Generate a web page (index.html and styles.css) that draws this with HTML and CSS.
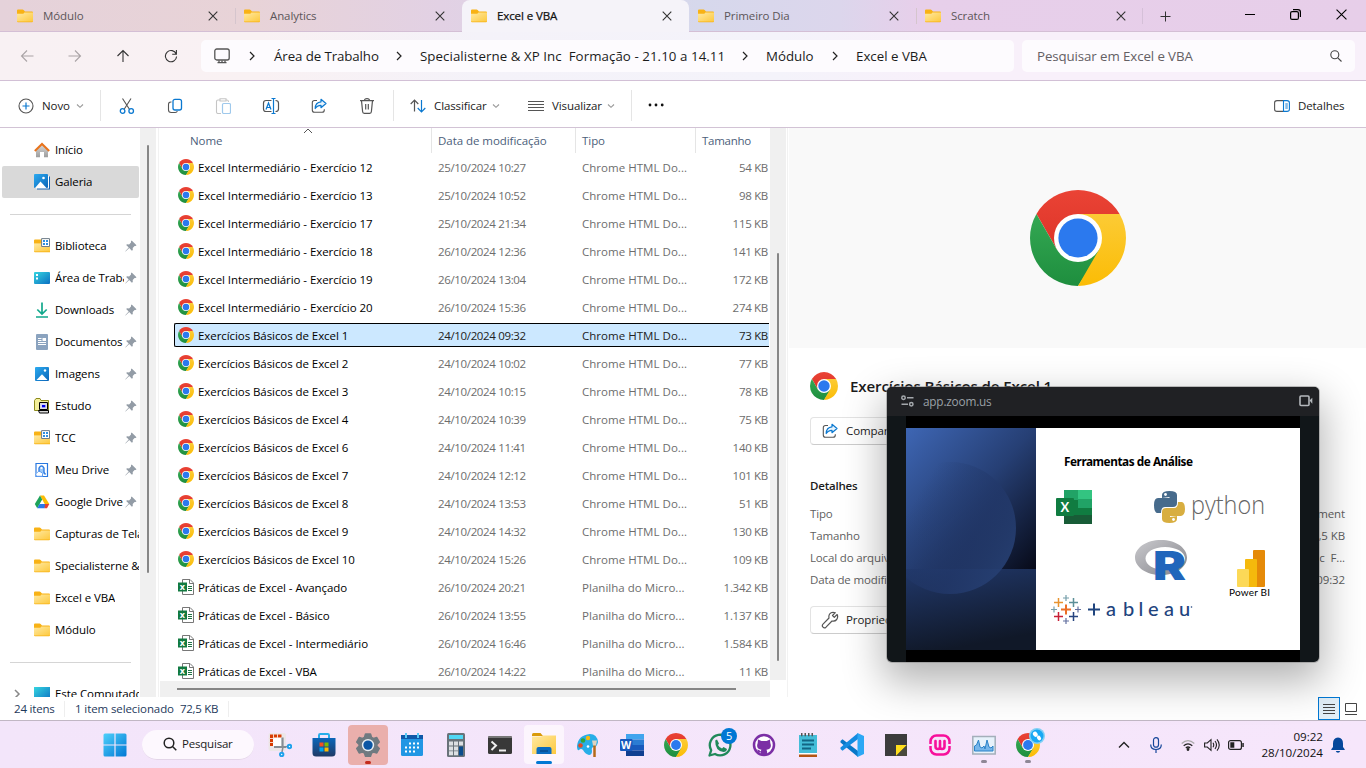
FILE: index.html
```html
<!DOCTYPE html>
<html lang="pt-BR">
<head>
<meta charset="utf-8">
<title>Excel e VBA</title>
<link rel="stylesheet" href="styles.css">
</head>
<body>
<svg class="defs" aria-hidden="true">
  <defs>
    <linearGradient id="gFold" x1="0" y1="0" x2="1" y2="1"><stop offset="0" stop-color="#ffe9a2"/><stop offset="1" stop-color="#fdc93f"/></linearGradient>
    <linearGradient id="gRed" x1="0" y1="0" x2="0" y2="1"><stop offset="0" stop-color="#ea4335"/><stop offset="1" stop-color="#dd3428"/></linearGradient>
    <linearGradient id="gGreen" x1="0" y1="0" x2="0" y2="1"><stop offset="0" stop-color="#34a853"/><stop offset="1" stop-color="#1e8e3e"/></linearGradient>
    <linearGradient id="gYel" x1="0" y1="0" x2="0" y2="1"><stop offset="0" stop-color="#fccb35"/><stop offset="1" stop-color="#fbbc05"/></linearGradient>
    <linearGradient id="gBlue" x1="0" y1="0" x2="1" y2="1"><stop offset="0" stop-color="#2cabf0"/><stop offset="1" stop-color="#0a64b8"/></linearGradient>
    <linearGradient id="gCyan" x1="0" y1="0" x2="1" y2="1"><stop offset="0" stop-color="#35d5e0"/><stop offset="1" stop-color="#0b6fc2"/></linearGradient>
    <linearGradient id="gHome" x1="0" y1="0" x2="0" y2="1"><stop offset="0" stop-color="#d8d8d8"/><stop offset="1" stop-color="#9d9d9d"/></linearGradient>
    <linearGradient id="gWin" x1="0" y1="0" x2="1" y2="1"><stop offset="0" stop-color="#4fd0fb"/><stop offset="1" stop-color="#0078d4"/></linearGradient>
    <linearGradient id="gStore" x1="0" y1="0" x2="0" y2="1"><stop offset="0" stop-color="#0c66ba"/><stop offset="1" stop-color="#203a66"/></linearGradient>
  </defs>
  <symbol id="folder" viewBox="0 0 16 16"><path fill="#f8b215" d="M0 2.6Q0 1.6 1 1.6h4.600q.6 0 1 .5L8 3.600h7q1 0 1 1V13q0 1.200-1 1.200H1q-1 0-1-1z"/><path fill="url(#gFold)" d="M0 5.800h5.600q.6 0 1-.4l.8-.8H16v8.300q0 .6-.8.6H.8q-.8 0-.8-.6z"/></symbol>
  <symbol id="library" viewBox="0 0 16 16"><path fill="#f8b215" d="M0 2.600Q0 1.600 1 1.600h6l1.400 1.800H16V14.200H1q-1 0-1-1z"/><path fill="url(#gFold)" d="M0 5.400h16v8H0z"/><path fill="#fff" stroke="#6f7d88" d="M7.600.6h7.900v7.900H7.600z"/><path fill="#2f8fe0" d="M9 2h2v2H9zm3 0h2v2h-2zM9 5h2v2H9zm3 0h2v2h-2z"/></symbol>
  <symbol id="chrome" viewBox="0 0 48 48"><path fill="url(#gRed)" d="M3.220 12A24 24 0 0 1 44.780 12L34 24 13.600 30z"/><path fill="url(#gGreen)" d="M3.220 12A24 24 0 0 0 24 48L36 30H13.600z"/><path fill="url(#gYel)" d="M24 48A24 24 0 0 0 44.780 12H24l10.400 18z"/><circle cx="24" cy="24" r="12" fill="#fff"/><circle cx="24" cy="24" r="9.800" fill="#2b79ee"/></symbol>
  <symbol id="xls" viewBox="0 0 16 16"><path fill="#fff" stroke="#777" d="M4.500.5h7.500l3.500 3.500v11.500h-11z"/><path fill="none" stroke="#777" d="M11.500.5v4h4"/><path stroke="#217346" d="M10 7.500h4M10 9.500h4M10 11.500h4"/><path fill="#127a40" d="M0 3.500h9v9H0z"/><text x="1.700" y="11" class="xs">x</text></symbol>
  <symbol id="pin" viewBox="0 0 12 12"><path fill="#939ca6" d="M6.700.5 11.500 5.300 10.600 6 9.600 5.900 7.700 7.900 7.800 10 6.900 10.800 4.200 8.100.6 11.500.3 11.200 3.700 7.600 1.200 5.100 2 4.300 4.100 4.400 6 2.400 6 1.300z"/></symbol>
  <symbol id="chev" viewBox="0 0 8 8"><path fill="none" stroke="#999" stroke-width="1.100" d="M1 2.500 4 5.300 7 2.500"/></symbol>
  <symbol id="chevR" viewBox="0 0 8 12"><path fill="none" stroke="#222" stroke-width="1.200" d="M2 2l4 4-4 4"/></symbol>
  <symbol id="x" viewBox="0 0 10 10"><path fill="none" stroke="#333" stroke-width="1.100" d="M.7.7l8.600 8.600M9.300.7L.7 9.300"/></symbol>
  <symbol id="share" viewBox="0 0 16 16"><path fill="none" stroke="#555" stroke-width="1.100" d="M6 2.500H3.500Q1.300 2.500 1.300 4.700v7.300Q1.300 14.300 3.500 14.300h7.500Q13.300 14.300 13.300 12v-.8"/><path fill="#e8f4fd" stroke="#0a78d0" stroke-width="1.200" stroke-linejoin="round" d="M10 1.300 15 5.500 10 9.700V7.300Q6 7.300 4.200 10.500 4.300 4.300 10 3.800z"/></symbol>
</svg>

<header class="tabs">
  <div class="tab"><svg class="i16"><use href="#folder"/></svg><span>Módulo</span><svg class="x"><use href="#x"/></svg></div>
  <div class="tab line"><svg class="i16"><use href="#folder"/></svg><span>Analytics</span><svg class="x"><use href="#x"/></svg></div>
  <div class="tab active"><svg class="i16"><use href="#folder"/></svg><span>Excel e VBA</span><svg class="x"><use href="#x"/></svg></div>
  <div class="tab"><svg class="i16"><use href="#folder"/></svg><span>Primeiro Dia</span><svg class="x"><use href="#x"/></svg></div>
  <div class="tab line"><svg class="i16"><use href="#folder"/></svg><span>Scratch</span><svg class="x"><use href="#x"/></svg></div>
  <div class="plus"><svg width="11" height="11" viewBox="0 0 11 11"><path d="M5.500.5v10M.5 5.500h10" stroke="#333"/></svg></div>
  <div class="winbtns">
    <svg width="10" height="10" viewBox="0 0 10 10"><path d="M0 5.500h10" stroke="#000"/></svg>
    <svg width="11" height="11" viewBox="0 0 11 11" fill="none" stroke="#000" stroke-width="1.200"><rect x=".6" y="2.600" width="7.800" height="7.800" rx="1.500"/><path d="M3 .6h5Q10.400.6 10.400 3v5"/></svg>
    <svg width="11" height="11" viewBox="0 0 10 10"><path d="M.5.5l9 9M9.500.5l-9 9" stroke="#000"/></svg>
  </div>
</header>

<nav class="address">
  <div class="arrows">
    <svg width="14" height="14" viewBox="0 0 14 14" class="dim"><path d="M13.500 7H1.500M7 1.500 1.500 7 7 12.500"/></svg>
    <svg width="14" height="14" viewBox="0 0 14 14" class="dim"><path d="M.5 7h12M7 1.500 12.500 7 7 12.500"/></svg>
    <svg width="14" height="14" viewBox="0 0 14 14"><path d="M7 13V1.500M1.500 7 7 1.500 12.500 7"/></svg>
    <svg width="14" height="14" viewBox="0 0 14 14"><path d="M12.200 5A5.600 5.600 0 1 0 12.600 7.500M12.400 1v4.200H8.200"/></svg>
  </div>
  <div class="crumbs">
    <svg width="16" height="16" viewBox="0 0 16 16" fill="none" stroke="#555" stroke-width="1.300"><rect x=".8" y="1" width="14.400" height="11" rx="2"/><path d="M5 12.500v2M11 12.500v2M3.500 14.700h9M8 12.500v2"/></svg>
    <svg class="cr"><use href="#chevR"/></svg><span>Área de Trabalho</span>
    <svg class="cr"><use href="#chevR"/></svg><span class="long">Specialisterne &amp; XP Inc&nbsp; Formação - 21.10 a 14.11</span>
    <svg class="cr"><use href="#chevR"/></svg><span>Módulo</span>
    <svg class="cr"><use href="#chevR"/></svg><span>Excel e VBA</span>
  </div>
  <div class="search"><span>Pesquisar em Excel e VBA</span><svg width="12" height="12" viewBox="0 0 12 12" fill="none" stroke="#444" stroke-width="1.100"><circle cx="4.800" cy="4.800" r="4"/><path d="M7.800 7.800 11.500 11.500"/></svg></div>
</nav>

<div class="toolbar">
  <div class="new"><svg width="16" height="16" viewBox="0 0 16 16" fill="none"><circle cx="8" cy="8" r="7" stroke="#555" stroke-width="1.100"/><path d="M8 4.500v7M4.500 8h7" stroke="#0a78d0" stroke-width="1.200"/></svg><span>Novo</span><svg class="ch"><use href="#chev"/></svg></div>
  <div class="tools">
    <svg width="16" height="16" viewBox="0 0 16 16" fill="none"><path d="M3.500.5 10.600 11.500M12 .5 5 11.500" stroke="#555" stroke-width="1.100"/><circle cx="3.600" cy="13" r="2.300" stroke="#0a78d0" stroke-width="1.300"/><circle cx="12.200" cy="13" r="2.300" stroke="#0a78d0" stroke-width="1.300"/></svg>
    <svg width="16" height="16" viewBox="0 0 16 16" fill="none"><path d="M4.500 4Q1.500 3.700 1.500 6.500v5.500Q1.500 14.500 4.200 14.500h4Q10 14.500 10.300 13" stroke="#555" stroke-width="1.100"/><rect x="6" y="1.300" width="8.500" height="10.700" rx="2" stroke="#0a78d0" stroke-width="1.300"/></svg>
    <svg width="16" height="16" viewBox="0 0 16 16" fill="none"><path d="M6 15.500H3Q1.500 15.500 1.500 14V3.500Q1.500 2 3 2h2M11 2h1Q13.500 2 13.500 4M5 .7h6v2.300H5z" stroke="#c5c5c5" stroke-width="1.100"/><rect x="7.500" y="5.500" width="8" height="10" rx="1.200" stroke="#9fc9ec" stroke-width="1.200"/></svg>
    <svg width="18" height="16" viewBox="0 0 18 16" fill="none"><path d="M9.500 2.500H4Q1.500 2.500 1.500 5v6Q1.500 13.500 4 13.500h5.500M13.500 2.500Q16.500 2.500 16.500 5v6Q16.500 13.500 13.500 13.500" stroke="#555" stroke-width="1.200"/><path d="M11.500.5v15M9.500.5h4M9.500 15.500h4M4 11.500 6.500 5 9 11.500M5 9.500h3" stroke="#0a78d0" stroke-width="1.200"/></svg>
    <svg width="16" height="16"><use href="#share"/></svg>
    <svg width="16" height="16" viewBox="0 0 16 16" fill="none" stroke="#555" stroke-width="1.200"><path d="M1 2.600h14M5.500 2.500Q5.500.6 8 .6t2.500 1.900M2.500 2.600 3.600 13.500Q3.700 15.300 5.300 15.300h5.400Q12.300 15.300 12.400 13.500L13.500 2.600M6.700 6v5.500M9.300 6v5.500"/></svg>
  </div>
  <div class="sort"><svg width="16" height="16" viewBox="0 0 16 16" fill="none" stroke-width="1.200"><path d="M4.500 13.500V2.500M.7 6 4.500 2.200 8.300 6" stroke="#555"/><path d="M11.500 2v11.500M7.700 10 11.500 13.800 15.300 10" stroke="#0a78d0"/></svg><span>Classificar</span><svg class="ch"><use href="#chev"/></svg></div>
  <div class="view"><svg width="16" height="12" viewBox="0 0 16 12"><path d="M0 1.500h16M0 4.500h16M0 7.500h16M0 10.500h16" stroke="#555"/></svg><span>Visualizar</span><svg class="ch"><use href="#chev"/></svg></div>
  <svg class="dots" width="16" height="4" viewBox="0 0 16 4"><circle cx="2" cy="2" r="1.400"/><circle cx="8" cy="2" r="1.400"/><circle cx="14.200" cy="2" r="1.400"/></svg>
  <div class="dt"><svg width="16" height="12" viewBox="0 0 16 12" fill="none"><path d="M9.500.6H3Q.6.6.6 2.800v6.400Q.6 11.400 3 11.400h6.500" stroke="#555" stroke-width="1.100"/><path d="M9.500.6h3.500Q15.400.6 15.400 2.800v6.400Q15.400 11.400 13 11.400H9.500zM11.300 4h2.500M11.300 6h2.500M11.300 8h2.500" stroke="#0a78d0" stroke-width="1.100"/></svg><span>Detalhes</span></div>
</div>

<main class="content">
  <aside class="side">
    <div class="item"><svg class="i16" viewBox="0 0 16 16"><path fill="url(#gHome)" d="M2 8 8 2.500 14 8v7.200h-4V10H6v5.200H2z"/><path fill="none" stroke="#e8731c" stroke-width="2" d="M.8 9 8 2 15.200 9"/></svg><span>Início</span></div>
    <div class="item sel"><svg class="i16" viewBox="0 0 16 16"><path fill="#1464b4" d="M3 2.500h13V15.500H3z"/><path fill="#fff" d="M2 2h13v12.500H2z"/><rect width="14" height="14" rx="1" fill="url(#gBlue)"/><path fill="#fff" d="M1 14 6.500 7.500 12.500 14z"/><circle cx="9.500" cy="4" r="1.300" fill="#fff"/></svg><span>Galeria</span></div>
    <div class="rule"></div>
    <div class="item p"><svg class="i16"><use href="#library"/></svg><span>Biblioteca</span><svg class="pin"><use href="#pin"/></svg></div>
    <div class="item p"><svg class="i16" viewBox="0 0 16 16"><rect y="2" width="16" height="12" rx="1" fill="url(#gCyan)"/><path fill="#fff" d="M2 4h2v2H2zm0 3.500h2v2H2z"/></svg><span>Área de Trabalho</span><svg class="pin"><use href="#pin"/></svg></div>
    <div class="item p"><svg class="i16" viewBox="0 0 16 16"><path fill="none" stroke="#12a88c" stroke-width="1.700" d="M8 .5V12M3.300 7.500 8 12 12.700 7.500M2 15h12"/></svg><span>Downloads</span><svg class="pin"><use href="#pin"/></svg></div>
    <div class="item p"><svg class="i16" viewBox="0 0 16 16"><rect x="2" width="12" height="16" rx="1" fill="#8ba3bf"/><path stroke="#fff" d="M4 4.500h3.500M4 6.500h3.500M4 8.500h8M4 10.500h8"/><path fill="#fff" d="M8.500 4H12v3H8.500z"/></svg><span>Documentos</span><svg class="pin"><use href="#pin"/></svg></div>
    <div class="item p"><svg class="i16" viewBox="0 0 16 16"><rect x="1" y="1" width="14" height="14" rx="1" fill="url(#gBlue)"/><path fill="#fff" d="M2.500 14 8 8.300 13.500 14z"/><circle cx="11" cy="4.500" r="1.200" fill="#fff"/></svg><span>Imagens</span><svg class="pin"><use href="#pin"/></svg></div>
    <div class="item p"><svg class="i16" viewBox="0 0 16 16"><path fill="#f3ef9b" stroke="#8d8a1d" d="M.5 12.500V2.500L2 .5h4l1 2h7.500v10z"/><path fill="#d8d8d8" stroke="#000" d="M5.500 4.500h8v7h-8zM4.500 12.500h10v2.500h-9z"/><path fill="#0000e8" stroke="#fff" stroke-width=".7" d="M7.500 6.500h4.300v3.300H7.500z"/></svg><span>Estudo</span><svg class="pin"><use href="#pin"/></svg></div>
    <div class="item p"><svg class="i16"><use href="#library"/></svg><span>TCC</span><svg class="pin"><use href="#pin"/></svg></div>
    <div class="item p"><svg class="i16" viewBox="0 0 16 16"><path fill="#fff" stroke="#2878e0" stroke-width="1.200" d="M2 1.500h11.500v13H2z"/><path fill="#9cc8f8" stroke="#2878e0" stroke-width="1.300" d="M5 10.500V6Q7.500 1.800 10 6v4.500l1.500 2"/><circle cx="7.500" cy="6" r="1.100" fill="#fff"/><path fill="#fff" stroke="#5d9cf0" d="M2.500 14.300Q.3 11.500 3.200 10.600 4.500 8.300 7 10q2.500 1 1.500 4.300z"/></svg><span>Meu Drive</span><svg class="pin"><use href="#pin"/></svg></div>
    <div class="item p"><svg class="i16" viewBox="0 0 16 16"><path fill="#fbbc04" d="M6 1.500h4L15.300 10h-4.600z"/><path fill="#1ea35a" d="M6 1.500 8.200 5.500 3.200 14.300.8 10z"/><path fill="#2878e8" d="M5.500 10h7l-2 4.300H3.200z"/><path fill="#e34133" d="M11 10h4.300L13 14.300h-2.500z"/></svg><span>Google Drive</span><svg class="pin"><use href="#pin"/></svg></div>
    <div class="item"><svg class="i16"><use href="#folder"/></svg><span>Capturas de Tela</span></div>
    <div class="item"><svg class="i16"><use href="#folder"/></svg><span>Specialisterne &amp; XP</span></div>
    <div class="item"><svg class="i16"><use href="#folder"/></svg><span>Excel e VBA</span></div>
    <div class="item"><svg class="i16"><use href="#folder"/></svg><span>Módulo</span></div>
    <div class="rule"></div>
    <div class="item tree"><svg class="tw" viewBox="0 0 8 12"><path fill="none" stroke="#888" stroke-width="1.500" d="M2 2l4 4-4 4"/></svg><svg class="i16" viewBox="0 0 16 16"><rect y="1" width="16" height="14" fill="url(#gCyan)"/></svg><span>Este Computador</span></div>
  </aside>
  <div class="track t1"><i></i></div>

  <section class="files">
    <div class="pane">
      <div class="head"><span>Nome<svg class="asc" viewBox="0 0 10 6"><path fill="none" stroke="#555" d="M1 5l4-4 4 4"/></svg></span><span>Data de modificação</span><span>Tipo</span><span>Tamanho</span></div>
      <div class="rows">
        <div class="row"><b><svg class="i16"><use href="#chrome"/></svg>Excel Intermediário - Exercício 12</b><span>25/10/2024 10:27</span><span>Chrome HTML Do...</span><em>54 KB</em></div>
        <div class="row"><b><svg class="i16"><use href="#chrome"/></svg>Excel Intermediário - Exercício 13</b><span>25/10/2024 10:52</span><span>Chrome HTML Do...</span><em>98 KB</em></div>
        <div class="row"><b><svg class="i16"><use href="#chrome"/></svg>Excel Intermediário - Exercício 17</b><span>25/10/2024 21:34</span><span>Chrome HTML Do...</span><em>115 KB</em></div>
        <div class="row"><b><svg class="i16"><use href="#chrome"/></svg>Excel Intermediário - Exercício 18</b><span>26/10/2024 12:36</span><span>Chrome HTML Do...</span><em>141 KB</em></div>
        <div class="row"><b><svg class="i16"><use href="#chrome"/></svg>Excel Intermediário - Exercício 19</b><span>26/10/2024 13:04</span><span>Chrome HTML Do...</span><em>172 KB</em></div>
        <div class="row"><b><svg class="i16"><use href="#chrome"/></svg>Excel Intermediário - Exercício 20</b><span>26/10/2024 15:36</span><span>Chrome HTML Do...</span><em>274 KB</em></div>
        <div class="row picked"><b><svg class="i16"><use href="#chrome"/></svg>Exercícios Básicos de Excel 1</b><span>24/10/2024 09:32</span><span>Chrome HTML Do...</span><em>73 KB</em></div>
        <div class="row"><b><svg class="i16"><use href="#chrome"/></svg>Exercícios Básicos de Excel 2</b><span>24/10/2024 10:02</span><span>Chrome HTML Do...</span><em>77 KB</em></div>
        <div class="row"><b><svg class="i16"><use href="#chrome"/></svg>Exercícios Básicos de Excel 3</b><span>24/10/2024 10:15</span><span>Chrome HTML Do...</span><em>78 KB</em></div>
        <div class="row"><b><svg class="i16"><use href="#chrome"/></svg>Exercícios Básicos de Excel 4</b><span>24/10/2024 10:39</span><span>Chrome HTML Do...</span><em>75 KB</em></div>
        <div class="row"><b><svg class="i16"><use href="#chrome"/></svg>Exercícios Básicos de Excel 6</b><span>24/10/2024 11:41</span><span>Chrome HTML Do...</span><em>140 KB</em></div>
        <div class="row"><b><svg class="i16"><use href="#chrome"/></svg>Exercícios Básicos de Excel 7</b><span>24/10/2024 12:12</span><span>Chrome HTML Do...</span><em>101 KB</em></div>
        <div class="row"><b><svg class="i16"><use href="#chrome"/></svg>Exercícios Básicos de Excel 8</b><span>24/10/2024 13:53</span><span>Chrome HTML Do...</span><em>51 KB</em></div>
        <div class="row"><b><svg class="i16"><use href="#chrome"/></svg>Exercícios Básicos de Excel 9</b><span>24/10/2024 14:32</span><span>Chrome HTML Do...</span><em>130 KB</em></div>
        <div class="row"><b><svg class="i16"><use href="#chrome"/></svg>Exercícios Básicos de Excel 10</b><span>24/10/2024 15:26</span><span>Chrome HTML Do...</span><em>109 KB</em></div>
        <div class="row"><b><svg class="i16"><use href="#xls"/></svg>Práticas de Excel - Avançado</b><span>26/10/2024 20:21</span><span>Planilha do Micro...</span><em>1.342 KB</em></div>
        <div class="row"><b><svg class="i16"><use href="#xls"/></svg>Práticas de Excel - Básico</b><span>26/10/2024 13:55</span><span>Planilha do Micro...</span><em>1.137 KB</em></div>
        <div class="row"><b><svg class="i16"><use href="#xls"/></svg>Práticas de Excel - Intermediário</b><span>26/10/2024 16:46</span><span>Planilha do Micro...</span><em>1.584 KB</em></div>
        <div class="row"><b><svg class="i16"><use href="#xls"/></svg>Práticas de Excel - VBA</b><span>26/10/2024 14:22</span><span>Planilha do Micro...</span><em>11 KB</em></div>
      </div>
      <div class="hbar"><i></i></div>
    </div>
    <div class="track t2"><i></i></div>
  </section>

  <section class="details">
    <div class="preview"><svg width="96" height="96"><use href="#chrome"/></svg></div>
    <div class="title"><svg width="28" height="28"><use href="#chrome"/></svg><h1>Exercícios Básicos de Excel 1</h1></div>
    <div class="btn"><svg width="16" height="16"><use href="#share"/></svg>Compartilhar</div>
    <h2>Detalhes</h2>
    <dl>
      <dt>Tipo</dt><dd>Chrome HTML Document</dd>
      <dt>Tamanho</dt><dd>72,5 KB</dd>
      <dt>Local do arquivo</dt><dd>XP Inc&nbsp; F...</dd>
      <dt>Data de modificação</dt><dd>24/10/2024 09:32</dd>
    </dl>
    <div class="btn props"><svg width="18" height="18" viewBox="0 0 18 18" fill="none" stroke="#555" stroke-width="1.200" stroke-linejoin="round"><path d="M16.200 3.500 13.300 6.300 11.500 4.500 14.300 1.700Q10.500.5 8.600 3 7.500 4.800 8 7L2 13.200Q.6 14.800 2 16.200t3 0L11 10q3 .6 4.700-1.500 1.600-2.500.5-5z"/></svg>Propriedades</div>
  </section>
</main>

<footer class="status"><span>24 itens</span><span>1 item selecionado</span><span>72,5 KB</span>
  <div class="modes"><div class="on"><svg width="12" height="12" viewBox="0 0 12 12"><path d="M0 1.500h12M0 4.500h12M0 7.500h12M0 10.500h12" stroke="#444"/></svg></div><svg width="12" height="12" viewBox="0 0 12 12" fill="none" stroke="#444"><path d="M.5.5h11v8H.5zM0 11.500h12"/></svg></div>
</footer>

<footer class="taskbar">
  <svg class="start" width="24" height="24" viewBox="0 0 24 24"><path fill="url(#gWin)" d="M2 .5h9.400v11H.5V2Q.5.5 2 .5zM12.600.5h9.400q1.500 0 1.500 1.500v9.500H12.600zM.5 12.600h10.900v10.900H2Q.5 23.500.5 22zM12.600 12.600h10.900V22q0 1.500-1.500 1.500h-9.400z"/></svg>
  <div class="pill"><svg width="14" height="14" viewBox="0 0 14 14" fill="none" stroke="#222" stroke-width="1.500"><circle cx="6" cy="6" r="4.800"/><path d="M9.500 9.500 13.300 13.300"/></svg>Pesquisar</div>
  <div class="apps">
    <div class="app"><svg viewBox="0 0 24 24"><rect x=".5" width="17.500" height="18" rx="2" fill="#ece6e8"/><path fill="#fff" d="M5 4h9v9H5z"/><path d="M2 1.500h11.500v3H5v8.500H2z" fill="#d83b01"/><path d="M5.500 1v4M9.500 1v4M1.500 5.500h4M1.500 9.500h4" stroke="#f7d5c8"/><path d="M14.500 4.500v10M6 14h12" stroke="#868d94" stroke-width="2.200"/><path d="m15 14-1 5m2-5 4-.5" stroke="#868d94" stroke-width="1.500"/><g fill="#fff" stroke="#1fa2ec" stroke-width="2"><circle cx="21.500" cy="13.500" r="1.700"/><circle cx="13.700" cy="21.500" r="1.700"/></g></svg></div>
    <div class="app"><svg viewBox="0 0 24 24"><path fill="none" stroke="#27aeea" stroke-width="2" d="M7 6V2.200Q7 1 8.200 1h7.600Q17 1 17 2.200V6"/><path fill="url(#gStore)" d="M.5 5h23v15q0 3.500-3.500 3.500H4Q.5 23.500.5 20z"/><path fill="#f25022" d="M7.500 9.500h4v4h-4z"/><path fill="#7fba00" d="M12.500 9.500h4v4h-4z"/><path fill="#00a4ef" d="M7.500 14.500h4v4h-4z"/><path fill="#ffb900" d="M12.500 14.500h4v4h-4z"/></svg></div>
    <div class="app alert"><svg viewBox="0 0 24 24"><path fill="#707a80" stroke="#707a80" stroke-linejoin="round" stroke-width="1.500" d="M9.500 1h5l1 3.300 2 1.100 3.300-.8L23.300 9l-2.400 2.500v1.500l2.400 2.500-2.500 4.400-3.300-.8-2 1.100-1 3h-5l-1-3-2-1.100-3.300.8L.7 15.500l2.400-2.500v-1.500L.7 9l2.500-4.400 3.300.8 2-1.100z"/><circle cx="12" cy="12.100" r="6.200" fill="#e8eef2"/><circle cx="12" cy="12.100" r="4.700" fill="#0a56a4"/></svg><i></i></div>
    <div class="app"><svg viewBox="0 0 24 24"><rect x="1" y="2" width="22" height="21" rx="1.500" fill="#2196e4"/><path fill="#0f58a8" d="M1 2h22v4H1z"/><path stroke="#57c8f5" stroke-width="2" d="M6 0v5M18 0v5"/><path stroke="#fff" stroke-width="2" stroke-dasharray="2 2" d="M9 10.500h10M5 14.500h14M5 18.500h10"/></svg></div>
    <div class="app"><svg viewBox="0 0 24 24"><rect x="3" width="18" height="24" rx="1.500" fill="#697279"/><path fill="#50d8f5" d="M5 2h14v4H5z"/><path fill="#dce0e3" d="M5 8.500h4v4H5zm5 0h4v4h-4zm5 0h4v4h-4zm-10 5h4v4H5zm5 0h4v4h-4zm-5 4.800h4v4H5zm5 0h4v4h-4z"/><path fill="#0a4c8c" d="M15 13.500h4v9h-4z"/></svg></div>
    <div class="app"><svg viewBox="0 0 24 24"><rect y="3" width="24" height="18" rx="1.500" fill="#383838"/><path fill="#777" d="M0 4.500Q0 3 1.500 3h21Q24 3 24 4.500V5H0z"/><path fill="none" stroke="#eee" stroke-width="2" d="M3.500 8.500 8 12.500 3.500 17M11 17.500h7"/></svg></div>
    <div class="app open"><svg viewBox="0 0 24 24"><path fill="#d99a0b" d="M0 2.500Q0 1 1.500 1h7L11 4H0z"/><path fill="url(#gFold)" d="M0 4.500h9l2-1h13V22H0z"/><path fill="#0a6cc0" d="M4.500 22v-5q0-2 2-2h11q2 0 2 2v5z"/><path stroke="#064d91" stroke-width="1.500" d="M8 19h8"/></svg><i></i></div>
    <div class="app"><svg viewBox="0 0 24 24"><path fill="#27aee8" d="M1 13Q2 2 14 1q7 0 8 8-1 5-4 5t-2 4q0 4-3 4-4-1-6-5-2-2-4 0-2 1-2-4z"/><circle cx="4.500" cy="12.500" r="2.300" fill="#e04a23"/><circle cx="7" cy="7.500" r="2.300" fill="#33a43a"/><circle cx="12" cy="5" r="2.200" fill="#f7b90c"/><circle cx="12" cy="13.500" r="1.300" fill="#fff"/><path stroke="#b46a19" stroke-width="2.500" d="M18.500 12v12"/><path fill="#ddd2c0" d="M16 7.500h5l-1 5h-3z"/></svg></div>
    <div class="app"><svg viewBox="0 0 24 24"><path fill="#41a5ee" d="M6 1h18v5.500H6z"/><path fill="#2b7cd3" d="M6 6.500h18V12H6z"/><path fill="#185abd" d="M6 12h18v5.500H6z"/><path fill="#103f91" d="M6 17.500h18V23H6z"/><rect y="6" width="12.500" height="12" rx="1" fill="#185abd"/><text x="1" y="16" class="word">W</text></svg></div>
    <div class="app"><svg><use href="#chrome"/></svg></div>
    <div class="app"><svg viewBox="0 0 24 24"><path fill="none" stroke="#20895a" stroke-width="2.300" stroke-linejoin="round" d="M1.500 22.500 3.200 17.200A10.300 10.300 0 1 1 7 21z"/><path fill="#20895a" d="M7.200 7.500 9 6.500l2 4-1 1.500q1.200 2.500 4 3.500l1.500-1.500 3.500 2q-.5 3-3.500 3Q7 18 7.200 7.500z"/></svg><span class="badge">5</span></div>
    <div class="app"><svg viewBox="0 0 24 24"><circle cx="12" cy="12" r="10" fill="#fff" stroke="#7b2fa5" stroke-width="2.500"/><path fill="#7b2fa5" d="M6 6.500 9.500 8h5L18 6.500l.3 3.500q2.200 6-3.800 6.800.8 1 .8 5h-6.600v-2.500Q6 20 5 16.500q2 0 3.900 2 0-1 .6-1.700Q3.500 16 5.700 10z"/></svg></div>
    <div class="app"><svg viewBox="0 0 24 24"><path fill="#44bdd8" d="M3 2h18v19H3z"/><path fill="#b45514" d="M3 21h18v3H3z"/><path fill="#fff" d="M3 20h18v1.500H3z"/><path stroke="#126584" stroke-width="1.800" d="M6 7.500h12M6 11.500h12M6 15.500h9"/><path stroke="#555" stroke-width="3.500" stroke-dasharray="1.500 2" d="M5 1.500h14"/></svg></div>
    <div class="app"><svg viewBox="0 0 24 24"><path fill="#0877c8" d="M.5 8 2.500 6.300 18 18v6L.5 9.500z"/><path fill="#148be0" d="M.5 16 2.500 17.700 18 6V0L.5 14.500z"/><path fill="#2ca8f5" d="M17.500 0 24 3v18l-6.500 3z"/></svg></div>
    <div class="app"><svg viewBox="0 0 24 24"><path fill="#3c3c3c" d="M1 1h22v22H1z"/><path fill="#ffde1c" d="M12 12h11L12 23z"/><path fill="#4a4a3c" d="M23 12v11H12z"/></svg></div>
    <div class="app"><svg viewBox="0 0 24 24"><rect x="2.500" y="2.500" width="19" height="19" rx="6" fill="none" stroke="#f7109b" stroke-width="2.500"/><path stroke="#f5e6fb" stroke-width="2" d="M0 12h4.500M19.500 12H24"/><path fill="none" stroke="#f7109b" stroke-width="2.600" stroke-linecap="round" stroke-linejoin="round" d="M7.500 8v5.500q0 2.500 2.500 2.500 2 0 2-2.500V8v5.500q0 2.500 2 2.500 2.500 0 2.500-2.500V8"/></svg></div>
    <div class="app run"><svg viewBox="0 0 24 24"><path fill="#e7f2fb" stroke="#a4afba" stroke-width="1.500" d="M.8 3.500h22.400v17.500H.8z"/><path fill="#76b6ea" stroke="#2a82c8" d="M2.500 18v-5l2-1 2-5 1.500 7 2 1 2-2 1 3 2-9 2 7 2 1 2-2v5z"/></svg><i></i></div>
    <div class="app run"><svg><use href="#chrome"/></svg><span class="badge link"><svg viewBox="0 0 16 16"><circle cx="8" cy="8" r="6.500" fill="#18a8f4"/><g fill="#fff"><ellipse cx="6.300" cy="6.300" rx="2.200" ry="2.800" transform="rotate(-35 6.300 6.300)"/><ellipse cx="10" cy="10" rx="1.900" ry="2.500" transform="rotate(-35 10 10)"/></g></svg></span><i></i></div>
  </div>
  <div class="tray">
    <svg width="12" height="8" viewBox="0 0 12 8" fill="none" stroke="#222" stroke-width="1.400"><path d="M1 6.500 6 1.500 11 6.500"/></svg>
    <svg class="mic" width="12" height="16" viewBox="0 0 12 16" fill="none" stroke="#16479a" stroke-width="1.200"><rect x="3.500" y=".7" width="5" height="9.500" rx="2.500"/><path d="M.7 7.500Q.7 12.500 6 12.500T11.300 7.500M6 12.500V16"/></svg>
    <svg class="wifi" width="14" height="12" viewBox="0 0 14 12" fill="none" stroke="#222" stroke-width="1.200"><path stroke="#aaa" d="M.7 4.500Q7-1.200 13.300 4.500"/><path d="M2.700 6.800q4.300-4 8.600 0M4.800 9q2.200-2 4.400 0"/><circle cx="7" cy="10.500" r=".8" fill="#222"/></svg>
    <svg class="vol" width="16" height="14" viewBox="0 0 16 14" fill="none" stroke="#222" stroke-width="1.100"><path d="M.6 5v4h2.700L7 12.300V1.700L3.300 5zM9 4.800q1.500 2.200 0 4.400M11 3q3 4 0 8M13 1.300q4.500 5.700 0 11.400"/></svg>
    <svg class="bat" width="16" height="10" viewBox="0 0 16 10"><rect x=".6" y=".6" width="12.800" height="8.800" rx="2" fill="none" stroke="#222" stroke-width="1.200"/><path fill="#222" d="M2.300 2.300h4v5.400h-4zM14.300 3h1.500v4h-1.500z"/></svg>
    <div class="clock">09:22<br>28/10/2024</div>
    <svg width="14" height="16" viewBox="0 0 14 16"><path fill="#05479b" d="M7 .5Q12 1 12 6.500v3.500l1.700 2.300v.7H.3v-.7L2 10V6.500Q2 1 7 .5zM4.800 14h4.400Q8.700 15.700 7 15.700T4.800 14z"/></svg>
  </div>
</footer>

<div class="pip">
  <div class="piphead"><svg width="13" height="12" viewBox="0 0 13 12" fill="none" stroke="#a4a8ac" stroke-width="1.500"><circle cx="2.500" cy="2.700" r="1.700"/><path d="M6 2.700h6.500M.5 9.300H7"/><circle cx="10.300" cy="9.300" r="1.700"/></svg><span>app.zoom.us</span><svg width="14" height="12" viewBox="0 0 14 12"><rect x="1" y="1" width="9" height="9.500" rx="1" fill="none" stroke="#b4b8bc" stroke-width="1.600"/><path fill="#b4b8bc" d="M10.500 5.500 13.300 2.700v6z"/></svg></div>
  <div class="video">
    <svg width="394" height="222" viewBox="0 0 394 222">
      <defs>
        <linearGradient id="s1" x1="0" y1="0" x2="1" y2="1"><stop offset="0" stop-color="#3e66b4"/><stop offset=".5" stop-color="#263f74"/><stop offset="1" stop-color="#070a18"/></linearGradient>
        <linearGradient id="s2" x1="0" y1="0" x2=".3" y2="1"><stop offset="0" stop-color="#21386a"/><stop offset="1" stop-color="#101828"/></linearGradient>
        <linearGradient id="s3" x1="0" y1="0" x2="1" y2=".6"><stop offset=".3" stop-color="#243c70" stop-opacity="0"/><stop offset=".75" stop-color="#22386a" stop-opacity=".75"/><stop offset="1" stop-color="#263f72" stop-opacity=".9"/></linearGradient>
        <linearGradient id="ring" x1="0" y1="0" x2="1" y2="1"><stop offset="0" stop-color="#c9c9cd"/><stop offset="1" stop-color="#85858b"/></linearGradient>
        <clipPath id="left"><path d="M0 0h130v222H0z"/></clipPath>
      </defs>
      <path fill="#fff" d="M0 0h394v222H0z"/>
      <g clip-path="url(#left)"><path fill="url(#s1)" d="M0 0h130v141H0z"/><path fill="url(#s2)" d="M0 141h130v81H0z"/><circle cx="44" cy="100" r="66" fill="url(#s3)"/></g>
      <text x="158" y="38" class="h" textLength="129">Ferramentas de Análise</text>
      <path fill="#21a366" d="M158 62h14v10h-14z"/><path fill="#33c481" d="M172 62h14v10h-14z"/><path fill="#107c41" d="M158 72h14v16h-14z"/><path fill="#21a366" d="M172 71h14v9h-14z"/><path fill="#107c41" d="M172 80h14v8h-14z"/><path fill="#185c37" d="M158 87h28v9h-28z"/><rect x="150" y="70" width="18" height="18" rx="1" fill="#107c41"/><text x="154.500" y="84" class="xl">X</text>
      <path fill="#476b8c" d="M256 70v-3q0-4 7.500-4t7.500 4v8q0 4-4 4h-8q-4 0-4 6h-4q-3-1-3-8t4-7h11.500v-1z"/><path fill="#d8ae40" d="M271 88v3q0 4-7.500 4t-7.500-4v-7q0-4 4-4h8q4 0 4-6h4q3 1 3 7t-4 7h-11v1z"/><circle cx="259.500" cy="66.500" r="1.400" fill="#fff"/><circle cx="267.500" cy="91.500" r="1.400" fill="#fff"/>
      <text x="285" y="86" class="py" textLength="74" lengthAdjust="spacingAndGlyphs">python</text>
      <path fill="url(#ring)" fill-rule="evenodd" d="M255 112c14.500 0 26 7.800 26 17.500S269.500 147 255 147s-26-7.800-26-17.500S240.500 112 255 112zm4 7c-11 0-19.500 5-19.500 11.500S248 142 259 142s20-5 20-11.500-9-11.500-20-11.500z"/>
      <text x="247" y="152" class="r" textLength="33" lengthAdjust="spacingAndGlyphs">R</text>
      <rect x="347" y="122" width="12" height="37" rx="1" fill="#e58a08"/><rect x="339" y="131" width="12" height="28" rx="1" fill="#f5b90c"/><rect x="331" y="141" width="12" height="18" rx="1" fill="#fcd957"/>
      <text x="323" y="168" class="bi" textLength="41">Power BI</text>
      <g fill="none" stroke-width="1.500"><path stroke="#eb6e26" stroke-width="2" d="M155 181.500h10M160 176.500v10"/><path stroke="#e89430" d="M148 174.500h9M152.500 170v9"/><path stroke="#5c8f98" d="M163 174.500h9M167.500 170v9"/><path stroke="#c72037" d="M148 188.500h9M152.500 184v9"/><path stroke="#27447f" d="M163 188.500h9M167.500 184v9"/><path stroke="#759eaa" stroke-width="1.200" d="M157 170h6M160 167v6M145 181.500h6M148 178.500v6"/><path stroke="#6370a0" stroke-width="1.200" d="M157 193h6M160 190v6M169 181.500h6M172 178.500v6"/></g>
      <path stroke="#1f447e" stroke-width="2" d="M182 181.500h12M188 175.500v12"/>
      <g class="tb"><text x="200" y="188">a</text><text x="217" y="188">b</text><text x="232.500" y="188">l</text><text x="242" y="188">e</text><text x="258" y="188">a</text><text x="273" y="188">u</text></g><circle cx="285.500" cy="179" r=".8" fill="#1f447e"/>
    </svg>
  </div>
</div>
</body>
</html>
```

FILE: styles.css
```css
* { box-sizing: border-box; }
body { margin: 0; width: 1366px; height: 768px; overflow: hidden; position: relative; display: flex; flex-direction: column; background: #fff; color: #1b1b1b; font: 11.5px/16px "Open Sans", "Noto Sans", sans-serif; letter-spacing: -.1px; white-space: nowrap; }
svg { display: block; flex: none; }
.defs { position: absolute; width: 0; height: 0; }
.i16 { width: 16px; height: 16px; }
.xs { font: bold 9px "Open Sans", sans-serif; fill: #fff; }
i { display: block; }

.tabs { height: 32px; flex: none; display: flex; background: linear-gradient(90deg, #e5d2da 0, #e8d3d7 250px, #e2d1e4 440px, #d6d8ec 700px, #dcd6ec 840px, #e7cfea 920px, #e7cee9 1366px); border-bottom: 1px solid #d4bfd5; }
.tab { width: 227px; height: 31px; display: flex; align-items: center; padding: 1px 17px 0 17px; color: #5c5659; position: relative; }
.tab:first-child { width: 235px; }
.tab:first-child + .tab { padding-left: 9px; }
.tab.active { height: 32px; padding-left: 9px; padding-bottom: 1px; background: #f5f3f9; border-radius: 8px 8px 0 0; color: #111; -webkit-text-stroke: .25px #111; }
.tab.active ~ .tab { padding-left: 9px; }
.tab.line::before { content: ""; position: absolute; left: 0; top: 8px; width: 1px; height: 16px; background: #d5c5cd; }
.tab span { margin-left: 10px; flex: 1; }
.x { width: 10px; height: 10px; }
.plus { margin-left: -1px; border-left: 1px solid #d5c0d8; height: 16px; margin-top: 8px; padding: 3px 0 0 17px; }
.winbtns { margin-left: auto; width: 121px; padding: 9px 19px 0 0; display: flex; justify-content: space-between; }

.address { height: 49px; flex: none; display: flex; align-items: center; padding: 0 11px 0 20px; background: linear-gradient(90deg, #f8f1f3 0, #f9f1f3 260px, #f4f2f9 480px, #f4f3fa 780px, #f8f0fa 940px, #f8f0fa 1366px); border-bottom: 1px solid #d2c0d6; font-size: 13.3px; letter-spacing: -.1px; }
.arrows { width: 181px; display: flex; gap: 34px; }
.arrows svg { fill: none; stroke: #333; stroke-width: 1.1; }
.arrows .dim { stroke: #aaa4a6; }
.crumbs, .search { height: 32px; background: #fdfbfe; border-radius: 5px; align-items: center; }
.crumbs { width: 813px; padding-left: 13px; display: grid; grid-template-columns: 34px 26px 121px 25px 321px 25px 65px 25px 80px; letter-spacing: 0; }
.crumbs span:nth-child(3) { letter-spacing: -.1px; }
.crumbs .long { letter-spacing: .06px; }
.cr { width: 8px; height: 12px; }
.search { flex: 1; margin-left: 8px; padding: 0 13px 0 15px; display: flex; justify-content: space-between; color: #646064; }

.toolbar { height: 47px; flex: none; display: flex; align-items: center; border-bottom: 1px solid #d2c3d5; padding: 2px 0 0; }
.toolbar > div { display: flex; align-items: center; height: 31px; padding-top: 1px; }
.ch { width: 8px; height: 8px; }
.new { width: 101px; padding-left: 18px; border-right: 1px solid #e5e5e5; }
.new span { width: 34px; margin-left: 8px; }
.tools { width: 293px; padding-left: 2px; border-right: 1px solid #e5e5e5; }
.tools svg { margin: 0 16px; }
.tools svg[width="18"] { margin: 0 15px; }
.sort { padding-left: 16px; width: 133px; }
.sort span { width: 58px; margin-left: 8px; }
.view { width: 105px; padding-left: 1px; border-right: 1px solid #e5e5e5; }
.view span { width: 55px; margin-left: 8px; }
.dots { margin-left: 16px; fill: #111; }
.dt { margin-left: auto; width: 92px; gap: 8px; }

.content { height: 569px; flex: none; display: flex; }
.side { width: 140px; padding-top: 6px; overflow: hidden; color: #000; }
.item { height: 32px; padding: 0 0 0 32px; margin: 0 1px 0 2px; display: flex; align-items: center; overflow: hidden; }
.item span { margin-left: 5px; overflow: hidden; }
.item.p span { width: 69px; }
.item.sel { background: #d9d9d9; border-radius: 2px; }
.item.tree { padding-left: 11px; }
.tw { width: 8px; height: 12px; margin-right: 13px; }
.pin { width: 12px; height: 12px; margin-left: 1px; }
.rule { height: 32px; margin: 0 9px 0 10px; padding-top: 16px; }
.rule::before { content: ""; display: block; height: 1px; background: #d5d5d5; }
.track { width: 16px; background: #f0f0f0; flex: none; }
.track i { width: 2px; background: #868686; margin-left: 7px; border-radius: 1px; }
.t1 i { height: 428px; margin-top: 17px; }
.files { width: 629px; margin-left: 2px; border-left: 1px solid #f2f2f2; display: flex; padding-left: 1px; }
.pane { width: 610px; display: flex; flex-direction: column; overflow: hidden; }
.head { height: 27px; flex: none; display: grid; grid-template-columns: 272px 144px 120px 74px; color: #4c607a; line-height: 26px; letter-spacing: -.05px; position: relative; }
.head span { padding-left: 6px; border-right: 1px solid #e5e5e5; height: 25px; }
.head span:first-child { padding-left: 30px; }
.head span:last-child { border: 0; letter-spacing: -.25px; }
.asc { position: absolute; left: 143px; top: 0; width: 10px; height: 6px; }
.rows { height: 526px; flex: none; overflow: hidden; padding-left: 14px; }
.row { height: 24px; margin-bottom: 4px; display: grid; grid-template-columns: 260px 144px 110px 76px; align-items: center; border: 1px solid transparent; border-right: 0; padding-left: 3px; margin-right: 1px; color: #6d6d6d; line-height: 18px; }
.row > span, .row > em { padding-top: 1px; }
.row b { font-weight: 400; color: #000; display: flex; align-items: center; gap: 4px; letter-spacing: -.07px; padding-top: 1px; }
.row b svg { margin-top: -1px; }
.row span:nth-child(2) { letter-spacing: -.35px; }
.row span:nth-child(3) { letter-spacing: .03px; }
.row em { font-style: normal; text-align: right; letter-spacing: -.3px; }
.row.picked { background: #cce8ff; border-color: #000; border-radius: 2px 0 0 2px; color: #222; }
.hbar { height: 16px; background: #f0f0f0; padding: 7px 0 0 17px; }
.hbar i { width: 559px; height: 2px; background: #868686; }
.t2 { height: 552px; }
.t2 i { height: 408px; margin-top: 125px; }
.details { flex: 1; border-left: 1px solid #f2f2f2; padding-left: 1px; }
.preview { height: 220px; background: #f9f9f9; display: flex; justify-content: center; align-items: center; }
.title { display: flex; align-items: center; gap: 12px; margin: 24px 0 17px 21px; height: 28px; }
.title h1 { margin: 0; font-size: 15.1px; font-weight: 600; letter-spacing: -.13px; }
.btn { margin-left: 21px; width: 150px; height: 28px; border: 1px solid #e3e3e3; border-bottom-color: #ccc; border-radius: 4px; display: flex; align-items: center; gap: 8px; padding-left: 11px; }
.details h2 { margin: 33px 0 0 21px; font-size: 11.5px; font-weight: 600; line-height: 16px; letter-spacing: -.2px; }
dl { margin: 9px 21px 15px; display: grid; grid-template-columns: 1fr 1fr; line-height: 22px; color: #5f5f5f; }
dt { letter-spacing: -.15px; }
dd { margin: 0; text-align: right; }
.btn.props { gap: 7px; padding-left: 10px; }

.status { height: 24px; flex: none; display: flex; align-items: center; color: #1e395b; padding-left: 14px; border-bottom: 1px solid #c1b7c4; }
.status span:nth-child(1) { width: 51px; border-right: 1px solid #eee; margin-right: 10px; letter-spacing: -.2px; }
.status span:nth-child(2) { width: 105px; }
.status span:nth-child(3) { width: 49px; border-right: 1px solid #eee; letter-spacing: -.3px; }
.modes { margin-left: auto; display: flex; align-items: center; gap: 5px; padding-right: 9px; }
.on { width: 22px; height: 23px; border: 1px solid #0078d4; background: #e1eef7; display: flex; align-items: center; justify-content: center; }

.taskbar { height: 47px; flex: none; background: linear-gradient(90deg, #f3e5fa, #f6e6fb); display: flex; align-items: center; padding-left: 103px; }
.pill { width: 112px; height: 30px; margin: 0 4px 0 15px; border-radius: 15px; background: #fdf8fe; border-bottom: 1px solid #e3d5e8; display: flex; align-items: center; padding-left: 21px; gap: 5px; letter-spacing: -.2px; }
.apps { display: flex; width: 792px; }
.app { width: 40px; height: 40px; margin: 0 2px; border-radius: 4px; display: flex; align-items: center; justify-content: center; position: relative; }
.app > svg { width: 24px; height: 24px; }
.app > i { position: absolute; bottom: 2px; left: 17px; width: 6px; height: 3px; border-radius: 2px; background: #8f8796; }
.app.alert { background: #eaafac; }
.app.alert > i { background: #c42b1c; bottom: 1px; }
.app.open { background: #fcf5fd; height: 39px; }
.app.open > i { background: #0078d4; left: 12px; width: 16px; bottom: 0; }
.badge { position: absolute; right: 3px; top: 3px; width: 16px; height: 16px; border-radius: 8px; background: #0078d4; color: #fff; font-size: 11px; line-height: 16px; text-align: center; }
.badge.link { background: #83d0f4; }
.badge svg { width: 16px; height: 16px; }
.word { font: bold 10.5px "Open Sans", sans-serif; fill: #fff; }
.tray { margin-left: auto; display: flex; align-items: center; padding-right: 21px; }
.mic { margin-left: 20px; }
.wifi { margin-left: 19px; }
.vol { margin-left: 9px; }
.bat { margin-left: 8px; }
.clock { width: 79px; margin-right: 8px; text-align: right; line-height: 16px; font-size: 11.6px; letter-spacing: 0; color: #111; }

.pip { position: absolute; left: 887px; top: 387px; width: 432px; height: 275px; background: #111619; border-radius: 5px; box-shadow: 0 0 0 1px #8888, 0 16px 40px 4px rgba(0,0,0,.3); overflow: hidden; }
.piphead { height: 29px; background: #202124; display: flex; align-items: center; padding: 0 6px 1px 14px; color: #9aa0a6; font-size: 11.8px; letter-spacing: -.2px; }
.piphead span { flex: 1; margin-left: 9px; }
.video { margin: 0 19px; height: 246px; padding: 12px 0; background: #000; }
.video .h { font: bold 11.8px "Noto Sans", sans-serif; letter-spacing: 0; fill: #000; }
.video .xl { font: bold 13px Lato, sans-serif; fill: #fff; }
.video .py { font: 300 26px "Open Sans", sans-serif; fill: #646464; letter-spacing: 0; }
.video .r { font: 900 40px Inter, "Liberation Sans", sans-serif; fill: #2166bb; letter-spacing: 0; }
.video .bi { font: 10px Lato, sans-serif; fill: #000; letter-spacing: 0; }
.video .tb { font: 500 20px Lato, sans-serif; fill: #1f447e; }
```
